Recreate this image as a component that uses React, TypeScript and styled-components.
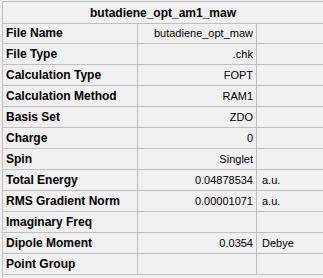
import React from 'react';
import styled, { createGlobalStyle } from 'styled-components';

const GlobalStyle = createGlobalStyle`
  html, body {
    margin: 0;
    padding: 0;
    background: #f0f0f0;
  }
  body {
    font-family: "Liberation Sans", Arial, sans-serif;
    font-size: 11px;
    color: #000;
  }
`;

const Page = styled.div`
  width: 323px;
  height: 278px;
  padding: 1px 0 0 2px;
  box-sizing: border-box;
  overflow: hidden;
`;

const Grid = styled.div`
  display: grid;
  grid-template-columns: 135px 119px 1fr;
  grid-auto-rows: 21px;
  height: 100%;
  border-left: 1px solid #bfbfbf;
  border-top: 1px solid #bfbfbf;
  box-sizing: border-box;
  align-content: start;
`;

const Header = styled.div`
  grid-column: 1 / -1;
  height: 22px;
  display: flex;
  align-items: center;
  justify-content: center;
  font-size: 12px;
  font-weight: bold;
  border-bottom: 1px solid #bfbfbf;
  box-sizing: border-box;
`;

const Cell = styled.div<{ $align?: 'left' | 'right'; $bold?: boolean; $last?: boolean }>`
  display: flex;
  align-items: center;
  justify-content: ${p => (p.$align === 'right' ? 'flex-end' : 'flex-start')};
  padding: ${p => (p.$align === 'right' ? '0 3px 0 0' : p.$last ? '0 0 0 5px' : '0 0 0 3px')};
  font-size: ${p => (p.$bold ? '12px' : '11px')};
  font-weight: ${p => (p.$bold ? 'bold' : 'normal')};
  border-bottom: 1px solid #bfbfbf;
  border-right: ${p => (p.$last ? 'none' : '1px solid #bfbfbf')};
  box-sizing: border-box;
  white-space: nowrap;
  overflow: hidden;
`;

const rows: [string, string, string][] = [
  ['File Name', 'butadiene_opt_maw', ''],
  ['File Type', '.chk', ''],
  ['Calculation Type', 'FOPT', ''],
  ['Calculation Method', 'RAM1', ''],
  ['Basis Set', 'ZDO', ''],
  ['Charge', '0', ''],
  ['Spin', 'Singlet', ''],
  ['Total Energy', '0.04878534', 'a.u.'],
  ['RMS Gradient Norm', '0.00001071', 'a.u.'],
  ['Imaginary Freq', '', ''],
  ['Dipole Moment', '0.0354', 'Debye'],
  ['Point Group', '', ''],
];

export default function App() {
  return (
    <>
      <GlobalStyle />
      <Page>
        <Grid>
          <Header>butadiene_opt_am1_maw</Header>
          {rows.map(([label, value, unit]) => (
            <React.Fragment key={label}>
              <Cell $bold>{label}</Cell>
              <Cell $align="right">{value}</Cell>
              <Cell $last>{unit}</Cell>
            </React.Fragment>
          ))}
        </Grid>
      </Page>
    </>
  );
}
